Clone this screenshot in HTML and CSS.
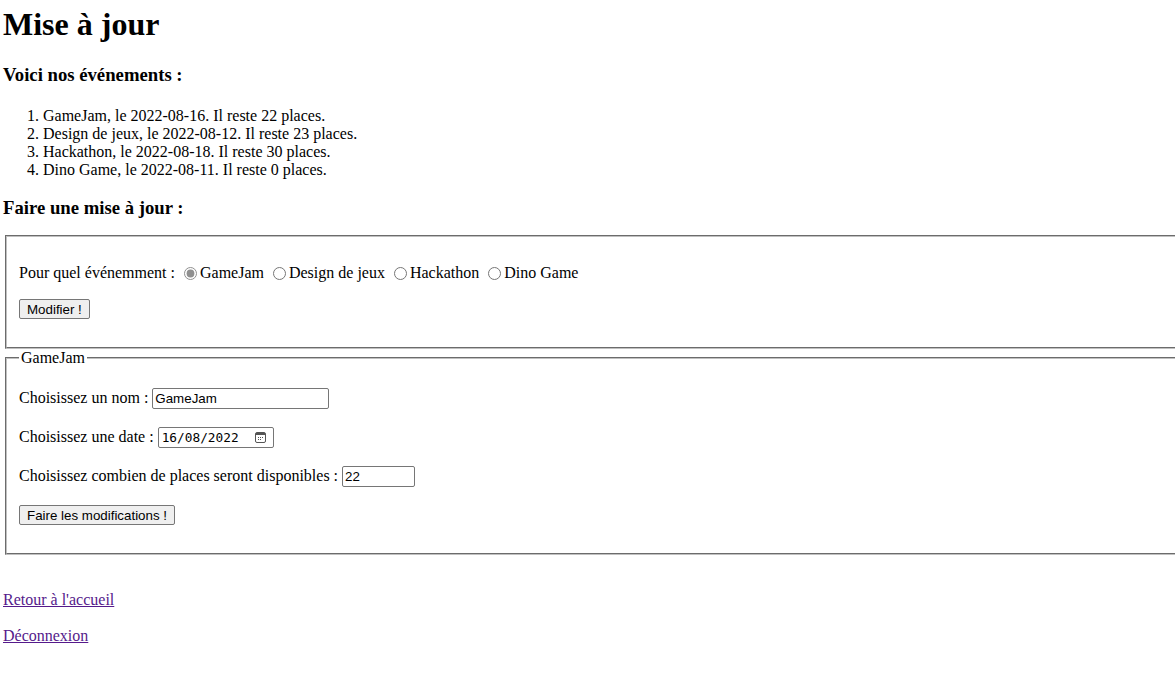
FILE: index.html
```html
<!DOCTYPE html>
<html lang="fr">
<head>
<meta charset="utf-8">
<title>Mise à jour</title>
<link rel="stylesheet" href="styles.css">
</head>
<body>
<div class="page">
  <h1 class="title">Mise à jour</h1>
  <h3 class="subtitle">Voici nos événements :</h3>
  <ol class="events">
    <li>GameJam, le 2022-08-16. Il reste 22 places.</li>
    <li>Design de jeux, le 2022-08-12. Il reste 23 places.</li>
    <li>Hackathon, le 2022-08-18. Il reste 30 places.</li>
    <li>Dino Game, le 2022-08-11. Il reste 0 places.</li>
  </ol>
  <h3 class="subtitle subtitle-form">Faire une mise à jour :</h3>
  <form class="form">
    <fieldset class="box">
      <div class="row row-first"><span>Pour quel événemment :</span>
        <label class="choice"><input type="radio" name="ev" class="radio" checked>GameJam</label>
        <label class="choice"><input type="radio" name="ev" class="radio">Design de jeux</label>
        <label class="choice"><input type="radio" name="ev" class="radio">Hackathon</label>
        <label class="choice"><input type="radio" name="ev" class="radio">Dino Game</label>
      </div>
      <div class="row"><button type="button" class="btn">Modifier !</button></div>
    </fieldset>
  </form>
  <form class="form">
    <fieldset class="box">
      <legend class="legend">GameJam</legend>
      <div class="row row-legend"><span>Choisissez un nom :</span><input type="text" class="field field-name" value="GameJam"></div>
      <div class="row"><span>Choisissez une date :</span><span class="field field-date"><input type="text" class="date-text" value="16/08/2022"><svg class="cal" width="13" height="13" viewBox="0 0 13 13"><rect x="1.5" y="1.5" width="10" height="10" rx="1.5" fill="none" stroke="#555" stroke-width="1"/><rect x="2" y="2" width="9" height="2" fill="#555"/><rect x="4" y="6" width="1" height="1" fill="#555"/><rect x="6" y="6" width="1" height="1" fill="#555"/><rect x="8" y="6" width="1" height="1" fill="#555"/><rect x="4" y="8" width="1" height="1" fill="#555"/><rect x="6" y="8" width="1" height="1" fill="#555"/></svg></span></div>
      <div class="row"><span>Choisissez combien de places seront disponibles :</span><input type="text" class="field field-num" value="22"></div>
      <div class="row"><button type="button" class="btn">Faire les modifications !</button></div>
    </fieldset>
  </form>
  <p class="link-row link-row-first"><a href="#" class="link">Retour à l'accueil</a></p>
  <p class="link-row"><a href="#" class="link">Déconnexion</a></p>
</div>
</body>
</html>
```
FILE: styles.css
```css
html, body {
  margin: 0;
  padding: 0;
  overflow: hidden;
  background: #fff;
}
body {
  font-family: "Liberation Serif", "Times New Roman", serif;
  font-size: 16px;
  color: #000;
}
.page {
  width: 1186px;
  padding-left: 3px;
}
.title {
  font-size: 32px;
  font-weight: bold;
  margin: 6px 0 21.44px;
}
.subtitle {
  font-size: 18.72px;
  font-weight: bold;
  margin: 18.72px 0;
}
.subtitle-form {
  margin-top: 17.7px;
  margin-bottom: 16.5px;
}
.events {
  margin: 20.7px 0 15px;
  padding-left: 40px;
}
.form {
  margin: 0;
}
.box {
  margin: 0 2px;
  padding: 5.6px 12px 10px;
  border: 2px groove #c0c0c0;
}
.legend {
  padding: 0 2px;
}
.row {
  display: flex;
  align-items: center;
  gap: 4px;
  height: 23px;
  margin: 16px 0;
}
.row-first {
  align-items: flex-end;
}
.row-legend {
  margin-top: 14px;
}
.choice {
  display: inline-flex;
  align-items: center;
}
.radio {
  margin: 1px 3px 0 5px;
  accent-color: #8f8f8f;
  width: 13px;
  height: 13px;
}
.btn {
  font-family: "Liberation Sans", Arial, sans-serif;
  font-size: 13.33px;
  height: 20px;
  padding: 1px 7px;
  background: #efefef;
  border: 1px solid #767676;
  border-radius: 2px;
  color: #000;
}
.field {
  font-family: "Liberation Sans", Arial, sans-serif;
  font-size: 13.33px;
  border: 1px solid #767676;
  border-radius: 2px;
  padding: 1px 2px;
  height: 21px;
  margin: 0;
  box-sizing: border-box;
  color: #000;
  background: #fff;
}
.field-name {
  width: 177px;
}
.field-num {
  width: 73px;
}
.field-date {
  display: inline-flex;
  align-items: center;
  width: 116px;
  padding: 0 6px 0 3px;
}
.date-text {
  border: 0;
  padding: 0;
  margin: 0;
  width: 86px;
  font-family: "DejaVu Sans Mono", "Liberation Mono", monospace;
  font-size: 12.8px;
  outline: none;
  background: transparent;
  color: #000;
}
.cal {
  margin-left: auto;
}
.link-row {
  margin: 16px 0;
  line-height: 20px;
}
.link-row-first {
  margin-top: 35px;
}
.link {
  color: #551a8b;
  text-decoration: underline;
}
```
